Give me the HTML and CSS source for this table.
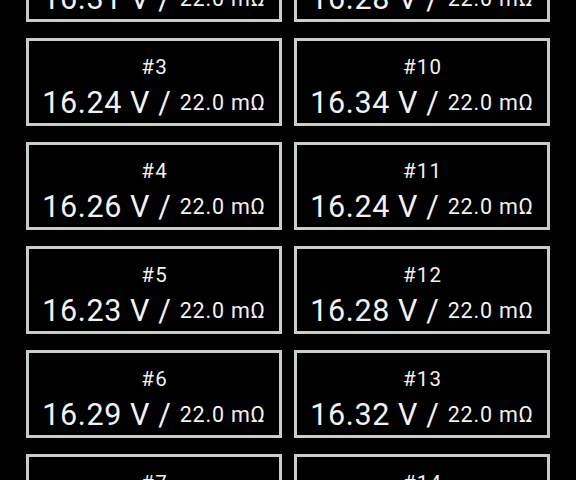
FILE: index.html
```html
<!DOCTYPE html>
<html>
<head>
<meta charset="utf-8">
<link rel="stylesheet" href="styles.css">
</head>
<body>
<div class="grid">
  <div class="card"><div class="num">#2</div><div class="val">16.31 V / <span class="res">22.0 mΩ</span></div></div>
  <div class="card"><div class="num">#9</div><div class="val">16.28 V / <span class="res">22.0 mΩ</span></div></div>
  <div class="card"><div class="num">#3</div><div class="val">16.24 V / <span class="res">22.0 mΩ</span></div></div>
  <div class="card"><div class="num">#10</div><div class="val">16.34 V / <span class="res">22.0 mΩ</span></div></div>
  <div class="card"><div class="num">#4</div><div class="val">16.26 V / <span class="res">22.0 mΩ</span></div></div>
  <div class="card"><div class="num">#11</div><div class="val">16.24 V / <span class="res">22.0 mΩ</span></div></div>
  <div class="card"><div class="num">#5</div><div class="val">16.23 V / <span class="res">22.0 mΩ</span></div></div>
  <div class="card"><div class="num">#12</div><div class="val">16.28 V / <span class="res">22.0 mΩ</span></div></div>
  <div class="card"><div class="num">#6</div><div class="val">16.29 V / <span class="res">22.0 mΩ</span></div></div>
  <div class="card"><div class="num">#13</div><div class="val">16.32 V / <span class="res">22.0 mΩ</span></div></div>
  <div class="card"><div class="num">#7</div><div class="val">16.27 V / <span class="res">22.0 mΩ</span></div></div>
  <div class="card"><div class="num">#14</div><div class="val">16.30 V / <span class="res">22.0 mΩ</span></div></div>
</div>
</body>
</html>
```
FILE: styles.css
```css
html, body {
  margin: 0;
  padding: 0;
  background: #000;
  overflow: hidden;
}
body {
  font-family: Roboto, "Liberation Sans", sans-serif;
  color: #f2f2f2;
}
.grid {
  display: grid;
  grid-template-columns: 256px 256px;
  column-gap: 12px;
  row-gap: 16px;
  padding: 0 26px;
  margin-top: -66px;
}
.card {
  box-sizing: border-box;
  height: 88px;
  border: 3px solid #c6cdca;
  text-align: center;
  padding-top: 14px;
}
.num {
  font-size: 20.5px;
  line-height: 24px;
  letter-spacing: 1.2px;
  text-indent: 1.2px;
}
.val {
  font-size: 30.5px;
  line-height: 36px;
  margin-top: 6px;
  white-space: nowrap;
  letter-spacing: 0.6px;
}
.res {
  font-size: 21.5px;
  letter-spacing: 0.8px;
  vertical-align: 3px;
}
```
